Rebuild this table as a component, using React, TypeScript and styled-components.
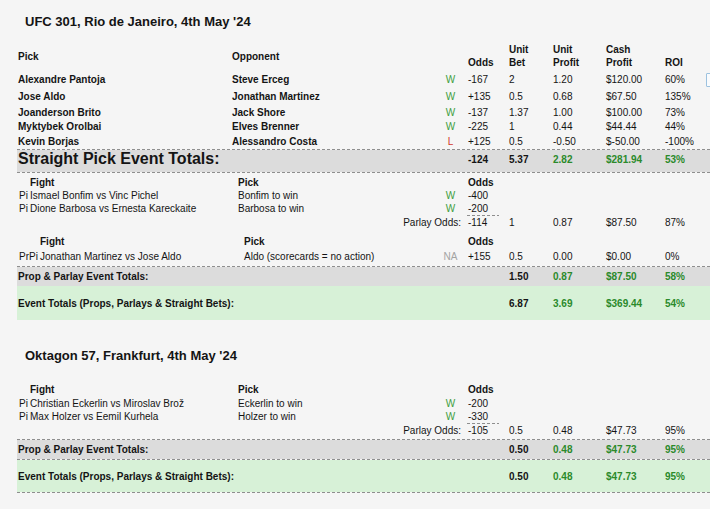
import React from 'react';
import styled, { createGlobalStyle } from 'styled-components';

const GlobalStyle = createGlobalStyle`
  html, body { margin: 0; padding: 0; background: #f5f5f5; }
  body {
    font-family: "Liberation Sans", Arial, Helvetica, sans-serif;
    font-size: 10px;
    color: #141414;
  }
  * { box-sizing: border-box; }
`;

const GREEN = '#2b8a2b';
const WIN = '#3d9e3d';
const LOSS = '#d2352a';
const MUTED = '#a3a3a3';
const DASH = 'repeating-linear-gradient(to right, #8e8e8e 0 3px, transparent 3px 5px)';

const TAIL = '28px 41px 44px 53px 59px 1fr';
const MAIN_COLS = `214px 208px ${TAIL}`;
const propCols = (pre: number, fight: number) => `${pre}px ${fight}px ${422 - pre - fight}px ${TAIL}`;

const Page = styled.main`
  display: flow-root;
  position: relative;
  width: 710px;
  height: 509px;
  overflow: hidden;
  padding-left: 17px;
  background: #f5f5f5;
`;

const EventTitle = styled.h2<{ $top: number }>`
  margin: ${(p) => p.$top}px 0 0 8px;
  height: 16px;
  line-height: 16px;
  font-size: 13px;
  font-weight: bold;
`;

const Row = styled.div<{ $cols: string; $h: number }>`
  display: grid;
  grid-template-columns: ${(p) => p.$cols};
  height: ${(p) => p.$h}px;
  align-items: center;
  line-height: 13px;
  white-space: nowrap;
`;

const HeaderRow = styled(Row)`
  margin-top: 13px;
  padding-bottom: 2px;
  align-items: end;
  font-weight: bold;
`;

const HeaderCell = styled.div<{ $mid?: boolean; $col?: string }>`
  padding-left: 1px;
  align-self: ${(p) => (p.$mid ? 'center' : 'end')};
  grid-column: ${(p) => p.$col ?? 'auto'};
`;

const Cell = styled.div<{ $bold?: boolean; $green?: boolean; $col?: string }>`
  padding-left: 1px;
  font-weight: ${(p) => (p.$bold ? 'bold' : 'normal')};
  color: ${(p) => (p.$green ? GREEN : 'inherit')};
  grid-column: ${(p) => p.$col ?? 'auto'};
  overflow: visible;
`;

const Mark = styled.div<{ $tone: 'W' | 'L' | 'NA' }>`
  grid-column: 4;
  text-align: center;
  padding-right: 5px;
  color: ${(p) => (p.$tone === 'W' ? WIN : p.$tone === 'L' ? LOSS : MUTED)};
`;

const MainMark = styled(Mark)`
  grid-column: 3;
`;

const Rule = styled.div`
  height: 1px;
  background: ${DASH};
`;

const Band = styled(Row)<{ $bg: string; $pb?: number }>`
  background: ${(p) => p.$bg};
  padding-bottom: ${(p) => p.$pb ?? 0}px;
`;

const BandLabel = styled.div<{ $big?: boolean }>`
  grid-column: 1 / 4;
  padding-left: 1px;
  font-weight: bold;
  font-size: ${(p) => (p.$big ? 16 : 10)}px;
  line-height: ${(p) => (p.$big ? 18 : 13)}px;
`;

const PropTable = styled.section<{ $mt: number; $pb?: number }>`
  margin-top: ${(p) => p.$mt}px;
  padding-bottom: ${(p) => p.$pb ?? 0}px;
`;

const Prefix = styled.div`
  grid-column: 1;
  padding-left: 2px;
  overflow: hidden;
`;

const ParlayLabel = styled.div`
  grid-column: 1 / 5;
  text-align: right;
  padding-right: 6px;
`;

const ParlayOdds = styled.div`
  grid-column: 5;
  align-self: stretch;
  display: flex;
  align-items: center;
  padding-left: 1px;
  background: ${DASH} top left / 32px 1px no-repeat;
`;

const SelectionHandle = styled.div`
  position: absolute;
  left: 706px;
  top: 73px;
  width: 10px;
  height: 14px;
  border: 1px solid #9dc2df;
  border-radius: 1px;
  background: #f9fbfd;
`;

type Result = 'W' | 'L' | 'NA';

const picks: { pick: string; opp: string; r: Result; odds: string; bet: string; up: string; cp: string; roi: string; h: number }[] = [
  { pick: 'Alexandre Pantoja', opp: 'Steve Erceg', r: 'W', odds: '-167', bet: '2', up: '1.20', cp: '$120.00', roi: '60%', h: 17 },
  { pick: 'Jose Aldo', opp: 'Jonathan Martinez', r: 'W', odds: '+135', bet: '0.5', up: '0.68', cp: '$67.50', roi: '135%', h: 17 },
  { pick: 'Joanderson Brito', opp: 'Jack Shore', r: 'W', odds: '-137', bet: '1.37', up: '1.00', cp: '$100.00', roi: '73%', h: 14 },
  { pick: 'Myktybek Orolbai', opp: 'Elves Brenner', r: 'W', odds: '-225', bet: '1', up: '0.44', cp: '$44.44', roi: '44%', h: 15 },
  { pick: 'Kevin Borjas', opp: 'Alessandro Costa', r: 'L', odds: '+125', bet: '0.5', up: '-0.50', cp: '$-50.00', roi: '-100%', h: 15 },
];

type PropLeg = { fight: string; pick: string; r: Result; odds: string; h: number; stats?: string[] };

type PropConfig = {
  prefix: string;
  pre: number;
  fight: number;
  headerH: number;
  legs: PropLeg[];
  parlay?: { odds: string; stats: string[]; h: number };
  mt: number;
  pb?: number;
};

const PropBlock: React.FC<{ c: PropConfig }> = ({ c }) => {
  const cols = propCols(c.pre, c.fight);
  return (
    <PropTable $mt={c.mt} $pb={c.pb}>
      <Row $cols={cols} $h={c.headerH}>
        <Cell $bold $col="2">Fight</Cell>
        <Cell $bold $col="3">Pick</Cell>
        <Cell $bold $col="5">Odds</Cell>
      </Row>
      {c.legs.map((l) => (
        <Row key={l.fight} $cols={cols} $h={l.h}>
          <Prefix>{c.prefix}</Prefix>
          <Cell $col="2">{l.fight}</Cell>
          <Cell $col="3">{l.pick}</Cell>
          <Mark $tone={l.r}>{l.r}</Mark>
          <Cell $col="5">{l.odds}</Cell>
          {l.stats?.map((s, i) => (
            <Cell key={i}>{s}</Cell>
          ))}
        </Row>
      ))}
      {c.parlay && (
        <Row $cols={cols} $h={c.parlay.h}>
          <ParlayLabel>Parlay Odds:</ParlayLabel>
          <ParlayOdds>{c.parlay.odds}</ParlayOdds>
          {c.parlay.stats.map((s, i) => (
            <Cell key={i}>{s}</Cell>
          ))}
        </Row>
      )}
    </PropTable>
  );
};

const TotalsValues: React.FC<{ odds?: string; bet: string; up: string; cp: string; roi: string }> = (v) => (
  <>
    <Cell $bold $col="4">{v.odds ?? ''}</Cell>
    <Cell $bold>{v.bet}</Cell>
    <Cell $bold $green>{v.up}</Cell>
    <Cell $bold $green>{v.cp}</Cell>
    <Cell $bold $green>{v.roi}</Cell>
  </>
);

const GRAY = '#dcdcdc';
const MINT = '#d7f1d7';

export default function App() {
  return (
    <>
      <GlobalStyle />
      <Page>
        <EventTitle $top={14}>UFC 301, Rio de Janeiro, 4th May '24</EventTitle>
        <HeaderRow $cols={MAIN_COLS} $h={28}>
          <HeaderCell $mid>Pick</HeaderCell>
          <HeaderCell $mid>Opponent</HeaderCell>
          <HeaderCell $col="4">Odds</HeaderCell>
          <HeaderCell>
            Unit
            <br />
            Bet
          </HeaderCell>
          <HeaderCell>
            Unit
            <br />
            Profit
          </HeaderCell>
          <HeaderCell>
            Cash
            <br />
            Profit
          </HeaderCell>
          <HeaderCell>ROI</HeaderCell>
        </HeaderRow>
        {picks.map((p) => (
          <Row key={p.pick} $cols={MAIN_COLS} $h={p.h}>
            <Cell $bold>{p.pick}</Cell>
            <Cell $bold>{p.opp}</Cell>
            <MainMark $tone={p.r}>{p.r}</MainMark>
            <Cell>{p.odds}</Cell>
            <Cell>{p.bet}</Cell>
            <Cell>{p.up}</Cell>
            <Cell>{p.cp}</Cell>
            <Cell>{p.roi}</Cell>
          </Row>
        ))}
        <Rule />
        <Band $cols={MAIN_COLS} $h={22} $pb={5} $bg={GRAY}>
          <BandLabel $big>Straight Pick Event Totals:</BandLabel>
          <TotalsValues odds="-124" bet="5.37" up="2.82" cp="$281.94" roi="53%" />
        </Band>
        <Rule />
        <PropBlock
          c={{
            prefix: 'Pi',
            pre: 12,
            fight: 208,
            headerH: 13,
            mt: 3,
            legs: [
              { fight: 'Ismael Bonfim vs Vinc Pichel', pick: 'Bonfim to win', r: 'W', odds: '-400', h: 13 },
              { fight: 'Dione Barbosa vs Ernesta Kareckaite', pick: 'Barbosa to win', r: 'W', odds: '-200', h: 13 },
            ],
            parlay: { odds: '-114', stats: ['1', '0.87', '$87.50', '87%'], h: 14 },
          }}
        />
        <PropBlock
          c={{
            prefix: 'PrPi',
            pre: 22,
            fight: 204,
            headerH: 14,
            mt: 5,
            pb: 2,
            legs: [
              {
                fight: 'Jonathan Martinez vs Jose Aldo',
                pick: 'Aldo (scorecards = no action)',
                r: 'NA',
                odds: '+155',
                h: 16,
                stats: ['0.5', '0.00', '$0.00', '0%'],
              },
            ],
          }}
        />
        <Rule />
        <Band $cols={MAIN_COLS} $h={19} $bg={GRAY}>
          <BandLabel>Prop &amp; Parlay Event Totals:</BandLabel>
          <TotalsValues bet="1.50" up="0.87" cp="$87.50" roi="58%" />
        </Band>
        <Band $cols={MAIN_COLS} $h={34} $bg={MINT}>
          <BandLabel>Event Totals (Props, Parlays &amp; Straight Bets):</BandLabel>
          <TotalsValues bet="6.87" up="3.69" cp="$369.44" roi="54%" />
        </Band>

        <EventTitle $top={28}>Oktagon 57, Frankfurt, 4th May '24</EventTitle>
        <PropBlock
          c={{
            prefix: 'Pi',
            pre: 12,
            fight: 208,
            headerH: 14,
            mt: 18,
            pb: 2,
            legs: [
              { fight: 'Christian Eckerlin vs Miroslav Brož', pick: 'Eckerlin to win', r: 'W', odds: '-200', h: 14 },
              { fight: 'Max Holzer vs Eemil Kurhela', pick: 'Holzer to win', r: 'W', odds: '-330', h: 13 },
            ],
            parlay: { odds: '-105', stats: ['0.5', '0.48', '$47.73', '95%'], h: 14 },
          }}
        />
        <Rule />
        <Band $cols={MAIN_COLS} $h={19} $bg={GRAY}>
          <BandLabel>Prop &amp; Parlay Event Totals:</BandLabel>
          <TotalsValues bet="0.50" up="0.48" cp="$47.73" roi="95%" />
        </Band>
        <Rule />
        <Band $cols={MAIN_COLS} $h={32} $bg={MINT}>
          <BandLabel>Event Totals (Props, Parlays &amp; Straight Bets):</BandLabel>
          <TotalsValues bet="0.50" up="0.48" cp="$47.73" roi="95%" />
        </Band>
        <Rule />
        <SelectionHandle />
      </Page>
    </>
  );
}
